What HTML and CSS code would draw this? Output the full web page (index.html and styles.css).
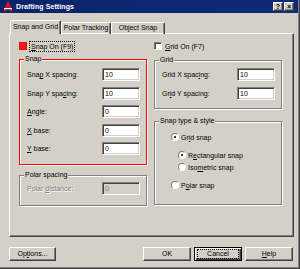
FILE: index.html
```html
<!DOCTYPE html>
<html>
<head>
<meta charset="utf-8">
<title>Drafting Settings</title>
<link rel="stylesheet" href="styles.css">
</head>
<body>
<div class="dialog">
  <div class="titlebar">
    <svg class="app-icon" viewBox="0 0 10 10" width="10" height="10">
      <path d="M0.5 9.5 L3.5 2 L6.5 2 L9.5 9.5 L7.3 9.5 L5 4.3 L2.7 9.5 Z" fill="#e8141c"/>
      <rect x="3.5" y="0.5" width="3" height="2" fill="#e8141c"/>
      <rect x="1" y="6" width="8" height="1.2" fill="#fff"/>
    </svg>
    <span class="title">Drafting Settings</span>
    <span class="tb-btns"><span class="tb-btn">?</span><span class="tb-btn">×</span></span>
  </div>

  <div class="tabs">
    <div class="tab tab-snap active">Snap and Grid</div>
    <div class="tab tab-polar">Polar Tracking</div>
    <div class="tab tab-osnap">Object Snap</div>
  </div>

  <div class="panel">
    <div class="col">
      <div class="check-row">
        <span class="checkbox red"></span>
        <span class="focus"><u>S</u>nap On (F9)</span>
      </div>
      <div class="group snap-group">
        <div class="group-title">Snap</div>
        <div class="rows">
          <div class="row"><span>Sna<u>p</u> X spacing:</span><span class="field">10</span></div>
          <div class="row"><span>Snap Y spa<u>c</u>ing:</span><span class="field">10</span></div>
          <div class="row"><span><u>A</u>ngle:</span><span class="field">0</span></div>
          <div class="row"><span><u>X</u> base:</span><span class="field">0</span></div>
          <div class="row"><span><u>Y</u> base:</span><span class="field">0</span></div>
        </div>
      </div>
      <div class="group polar-group">
        <div class="group-title">Polar spacing</div>
        <div class="rows polar-rows">
          <div class="row disabled"><span>Polar <u>d</u>istance:</span><span class="field">0</span></div>
        </div>
      </div>
    </div>

    <div class="col">
      <div class="check-row">
        <span class="checkbox"></span>
        <span class="plain"><u>G</u>rid On (F7)</span>
      </div>
      <div class="group grid-group">
        <div class="group-title">Grid</div>
        <div class="rows grid-rows">
          <div class="row"><span>Grid X spac<u>i</u>ng:</span><span class="field">10</span></div>
          <div class="row"><span>Gr<u>i</u>d Y spacing:</span><span class="field">10</span></div>
        </div>
      </div>
      <div class="group type-group">
        <div class="group-title">Snap type &amp; style</div>
        <div class="radios">
          <div class="radio-row r-grid"><span class="radio on"></span><span>Gr<u>i</u>d snap</span></div>
          <div class="radio-row r-rect"><span class="radio on"></span><span>R<u>e</u>ctangular snap</span></div>
          <div class="radio-row r-iso"><span class="radio"></span><span>Iso<u>m</u>etric snap</span></div>
          <div class="radio-row r-polar"><span class="radio"></span><span>P<u>o</u>lar snap</span></div>
        </div>
      </div>
    </div>
  </div>

  <div class="footer">
    <div class="btn btn-options">Op<u>t</u>ions...</div>
    <div class="btn btn-ok">OK</div>
    <div class="btn default"><span class="focus-inner">Cancel</span></div>
    <div class="btn"><u>H</u>elp</div>
  </div>
</div>
</body>
</html>
```

FILE: styles.css
```css
* { box-sizing: border-box; }
html, body { margin: 0; padding: 0; }
body {
  width: 300px;
  height: 269px;
  overflow: hidden;
  background: #d4d0c8;
  font-family: "Liberation Sans", Arial, sans-serif;
  font-size: 7px;
  color: #000;
}
u { text-decoration: underline; text-underline-offset: 1px; }

.dialog {
  width: 300px;
  height: 269px;
  display: flex;
  flex-direction: column;
  border-right: 1px solid #404040;
  border-bottom: 1px solid #404040;
  box-shadow: inset -1px -1px 0 #808080;
}

/* title bar */
.titlebar {
  flex: none;
  height: 13px;
  margin-right: 1px;
  background: linear-gradient(90deg, #0a246a, #0d2a74);
  display: flex;
  align-items: center;
  padding-left: 3px;
  color: #fff;
}
.app-icon { flex: none; margin-right: 3px; }
.title { flex: 1; font-weight: bold; font-size: 7px; letter-spacing: 0.1px; }
.tb-btns { display: flex; gap: 1px; margin-right: 4px; }
.tb-btn {
  width: 10px;
  height: 9px;
  background: #d4d0c8;
  border: 1px solid;
  border-color: #fff #404040 #404040 #fff;
  box-shadow: inset -1px -1px 0 #808080;
  color: #000;
  font-size: 7px;
  font-weight: bold;
  line-height: 7px;
  text-align: center;
}

/* tabs */
.tabs {
  flex: none;
  display: flex;
  align-items: flex-end;
  height: 14px;
  margin: 7px 0 -1px 10px;
  position: relative;
  z-index: 1;
}
.tab {
  height: 12px;
  border: 1px solid;
  border-bottom: none;
  border-color: #fff #404040 transparent #fff;
  border-radius: 2px 2px 0 0;
  box-shadow: inset -1px 0 0 #808080;
  line-height: 10px;
  text-align: center;
  white-space: nowrap;
}
.tab.active { height: 14px; background: #d4d0c8; line-height: 12px; }
.tab-snap { width: 51px; }
.tab-polar { width: 50px; }
.tab-osnap { width: 54px; }

/* panel */
.panel {
  flex: none;
  height: 204px;
  margin: 0 5px 0 9px;
  border: 1px solid;
  border-color: #fff #404040 #404040 #fff;
  box-shadow: inset -1px -1px 0 #808080;
  display: grid;
  grid-template-columns: 128px 128px;
  column-gap: 7px;
  align-items: start;
  padding: 8px 0 0 9px;
}
.col { display: flex; flex-direction: column; }

.check-row { display: flex; align-items: center; height: 8px; gap: 3px; }
.checkbox {
  flex: none;
  width: 8px;
  height: 8px;
  background: #fff;
  border: 1px solid;
  border-color: #808080 #fff #fff #808080;
  box-shadow: inset 1px 1px 0 #404040;
}
.checkbox.red { background: #ee1c1c; border-color: #e01010; box-shadow: none; }
.focus { outline: 1px dotted #000; padding: 0 1px; line-height: 9px; }
.plain { padding-left: 0; line-height: 9px; }

/* group boxes */
.group {
  display: flex;
  flex-direction: column;
  border: 1px solid #808080;
  box-shadow: inset 1px 1px 0 #fff, 1px 1px 0 #fff;
}
.group-title {
  align-self: flex-start;
  margin: -6px 0 0 4px;
  padding: 0 1px;
  line-height: 9px;
  background: #d4d0c8;
  white-space: nowrap;
}
.snap-group { margin-top: 9px; height: 106px; border-color: #f00; }
.polar-group { margin-top: 10px; height: 31px; }
.grid-group { margin-top: 10px; height: 49px; }
.type-group { margin-top: 12px; height: 84px; }

.rows {
  display: flex;
  flex-direction: column;
  gap: 5.5px;
  margin-top: 5px;
  padding: 0 6px 0 7px;
}
.grid-rows { margin-top: 4px; }
.polar-rows { margin-top: 3px; }
.row {
  display: flex;
  justify-content: space-between;
  align-items: center;
  height: 13px;
  white-space: nowrap;
}
.field {
  flex: none;
  width: 38px;
  height: 13px;
  background: #fff;
  border: 1px solid;
  border-color: #808080 #fff #fff #808080;
  box-shadow: inset 1px 1px 0 #404040, inset -1px -1px 0 #d4d0c8;
  padding: 0 2px;
  line-height: 11px;
}
.disabled { color: #808080; }
.disabled > span:first-child { text-shadow: 1px 1px 0 #fff; }
.disabled .field { background: #d4d0c8; }

/* radios */
.radios { display: flex; flex-direction: column; margin-top: 7px; padding-left: 16px; }
.radio-row { display: flex; align-items: center; gap: 2px; height: 10px; white-space: nowrap; }
.r-rect { margin-top: 8px; margin-left: 7px; }
.r-iso { margin-top: 2px; margin-left: 7px; }
.r-polar { margin-top: 8px; }
.radio {
  flex: none;
  width: 8px;
  height: 8px;
  border-radius: 50%;
  background: #fff;
  border: 1px solid;
  border-color: #808080 #fff #fff #808080;
  display: flex;
  align-items: center;
  justify-content: center;
}
.radio.on::after {
  content: "";
  width: 2px;
  height: 2px;
  border-radius: 50%;
  background: #000;
}

/* footer */
.footer {
  flex: none;
  display: flex;
  gap: 3px;
  height: 14px;
  margin-top: 10px;
  padding: 0 6px 0 9px;
}
.btn {
  width: 48px;
  height: 14px;
  border: 1px solid;
  border-color: #fff #404040 #404040 #fff;
  box-shadow: inset -1px -1px 0 #808080;
  text-align: center;
  line-height: 12px;
  white-space: nowrap;
}
.btn-options { width: 47px; }
.btn-ok { margin-left: auto; }
.btn.default {
  border-color: #000;
  box-shadow: inset 1px 1px 0 #fff, inset -1px -1px 0 #404040, inset -2px -2px 0 #808080;
  padding: 2px 3px;
  line-height: 8px;
}
.focus-inner { display: block; outline: 1px dotted #000; line-height: 8px; }
```
